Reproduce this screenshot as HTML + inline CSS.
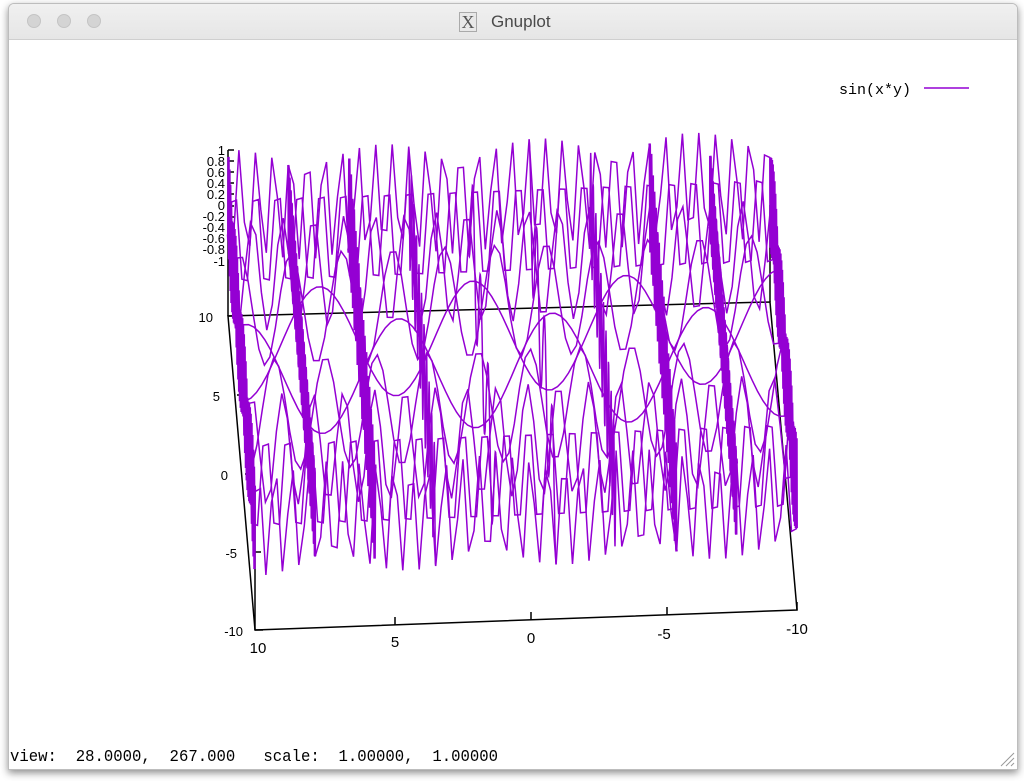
<!DOCTYPE html>
<html><head><meta charset="utf-8"><style>
html,body{margin:0;padding:0;background:#fff;width:1024px;height:781px;overflow:hidden;font-family:"Liberation Sans",sans-serif}
.win{position:absolute;left:8px;top:3px;width:1008px;height:765px;background:#fff;border:1px solid #bdbdbd;border-radius:6px 6px 0 0;box-shadow:0 3px 8px rgba(0,0,0,.45);overflow:hidden}
.tb{position:absolute;left:0;top:0;width:100%;height:35px;background:linear-gradient(#f0f0f0,#e6e6e6);border-bottom:1px solid #cfcfcf}
.dot{position:absolute;top:10px;width:14px;height:14px;border-radius:50%;background:#d4d4d4;border:1px solid #c4c4c4;box-sizing:border-box}
.title{position:absolute;left:482px;top:8px;font-size:17px;color:#4a4a4a}
.xi{position:absolute;left:450px;top:8px;width:18px;height:20px;border:1px solid #aaa;background:#e8e8e8;box-sizing:border-box;font-family:"Liberation Serif",serif;font-size:18px;line-height:18px;text-align:center;color:#555}
.status{position:absolute;left:1px;top:744px;font-family:"Liberation Mono",monospace;font-size:17px;color:#000;transform:scaleX(.92);transform-origin:left top;white-space:pre}
</style></head><body>
<div class="win">
<div class="tb"><div class="dot" style="left:18px"></div><div class="dot" style="left:48px"></div><div class="dot" style="left:78px"></div><div class="xi">X</div><div class="title">Gnuplot</div></div>
<div class="status">view:  28.0000,  267.000   scale:  1.00000,  1.00000</div>
<svg style="position:absolute;right:2px;bottom:2px" width="18" height="18"><path d="M4 17L17 4M9 17L17 9M14 17L17 14" stroke="#999" stroke-width="1"/></svg>
</div>
<svg id="p" width="1024" height="781" style="position:absolute;left:0;top:0" font-family="Liberation Sans, sans-serif" font-size="15">
<g stroke="#000" stroke-width="1.5" fill="none">
<path d="M255 630L797 610L770 302L228 316Z"/>
<path d="M228 316L228 150M255 630L255 490M770 302L770 205"/>
<path d="M228 150h6M228 161h6M228 172h6M228 183h6M228 194h6M228 206h6M228 217h6M228 228h6M228 239h6M228 250h6M228 262h6"/>
<path d="M228 316h8M237 395h8M245 474h8M253 552h8M255 630h8M395 625v-8M531 620v-8M667 615v-8M797 610v-8"/>
</g>
<g id="curves" fill="none" stroke="#9400d3" stroke-width="1.5"></g>
<g text-anchor="end" font-size="13">
<text x="225" y="155">1</text><text x="225" y="166">0.8</text><text x="225" y="177">0.6</text><text x="225" y="188">0.4</text><text x="225" y="199">0.2</text><text x="225" y="210">0</text><text x="225" y="221">-0.2</text><text x="225" y="232">-0.4</text><text x="225" y="243">-0.6</text><text x="225" y="254">-0.8</text><text x="225" y="266">-1</text>
<text x="213" y="322">10</text><text x="220" y="401">5</text><text x="228" y="480">0</text><text x="237" y="558">-5</text><text x="243" y="636">-10</text>
</g>
<g text-anchor="middle">
<text x="258" y="653">10</text><text x="395" y="647">5</text><text x="531" y="643">0</text><text x="664" y="639">-5</text><text x="797" y="634">-10</text>
</g>
<text x="839" y="94" font-family="Liberation Mono, monospace" font-size="15">sin(x*y)</text>
<path d="M924 88H969" stroke="#9400d3" stroke-width="1.5"/>
</svg>
<script>
(function(){
function P(x,y){var u=(10-x)/20,v=(y+10)/20,z=Math.sin(x*y);
return [255+542*u-27*v, 630-20*u-314*v-110-56*z];}
var g=document.getElementById('curves'),h='';
for(var i=0;i<10;i++){var c=-10+20*i/9,a=[],b=[];
for(var k=0;k<100;k++){var t=-10+20*k/99;
var p=P(t,c);a.push(p[0].toFixed(1)+','+p[1].toFixed(1));
var q=P(c,t);b.push(q[0].toFixed(1)+','+q[1].toFixed(1));}
var w=Math.abs(c)>4?' stroke-width="2.5"':'';
h+='<polyline points="'+a.join(' ')+'"/><polyline'+w+' points="'+b.join(' ')+'"/>';}
g.innerHTML=h;
})();
</script>
</body></html>
